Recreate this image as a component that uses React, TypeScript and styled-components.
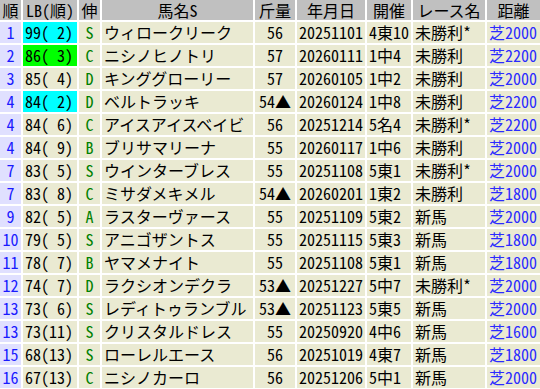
import React from 'react'
import styled, { createGlobalStyle } from 'styled-components'

const GlobalStyle = createGlobalStyle`
  html, body {
    margin: 0;
    padding: 0;
    background: #ffffff;
  }
  body {
    font-family: "Noto Sans CJK JP", "Noto Sans", sans-serif;
    font-size: 16px;
    color: #000000;
    font-feature-settings: "hwid";
  }
`

interface Entry {
  rank: string
  lb: string
  lbColor?: string
  grow: string
  name: string
  weight: string
  date: string
  meet: string
  race: string
  dist: string
}

const entries: Array<Entry> = [
  { rank: '1', lb: '99( 2)', lbColor: '#00ffff', grow: 'S', name: 'ウィロークリーク', weight: '56', date: '20251101', meet: '4東10', race: '未勝利*', dist: '芝2000' },
  { rank: '2', lb: '86( 3)', lbColor: '#00ff00', grow: 'C', name: 'ニシノヒノトリ', weight: '57', date: '20260111', meet: '1中4', race: '未勝利', dist: '芝2200' },
  { rank: '3', lb: '85( 4)', grow: 'D', name: 'キンググローリー', weight: '57', date: '20260105', meet: '1中2', race: '未勝利', dist: '芝2000' },
  { rank: '4', lb: '84( 2)', lbColor: '#00ffff', grow: 'D', name: 'ベルトラッキ', weight: '54▲', date: '20260124', meet: '1中8', race: '未勝利', dist: '芝2200' },
  { rank: '4', lb: '84( 6)', grow: 'C', name: 'アイスアイスベイビ', weight: '56', date: '20251214', meet: '5名4', race: '未勝利*', dist: '芝2200' },
  { rank: '4', lb: '84( 9)', grow: 'B', name: 'ブリサマリーナ', weight: '55', date: '20260117', meet: '1中6', race: '未勝利', dist: '芝2000' },
  { rank: '7', lb: '83( 5)', grow: 'S', name: 'ウインターブレス', weight: '55', date: '20251108', meet: '5東1', race: '未勝利*', dist: '芝2000' },
  { rank: '7', lb: '83( 8)', grow: 'C', name: 'ミサダメキメル', weight: '54▲', date: '20260201', meet: '1東2', race: '未勝利', dist: '芝1800' },
  { rank: '9', lb: '82( 5)', grow: 'A', name: 'ラスターヴァース', weight: '55', date: '20251109', meet: '5東2', race: '新馬', dist: '芝2000' },
  { rank: '10', lb: '79( 5)', grow: 'S', name: 'アニゴザントス', weight: '55', date: '20251115', meet: '5東3', race: '新馬', dist: '芝1800' },
  { rank: '11', lb: '78( 7)', grow: 'B', name: 'ヤマメナイト', weight: '55', date: '20251108', meet: '5東1', race: '新馬', dist: '芝1800' },
  { rank: '12', lb: '74( 7)', grow: 'D', name: 'ラクシオンデクラ', weight: '53▲', date: '20251227', meet: '5中7', race: '未勝利*', dist: '芝2000' },
  { rank: '13', lb: '73( 6)', grow: 'S', name: 'レディトゥランブル', weight: '53▲', date: '20251123', meet: '5東5', race: '新馬', dist: '芝2000' },
  { rank: '13', lb: '73(11)', grow: 'S', name: 'クリスタルドレス', weight: '55', date: '20250920', meet: '4中6', race: '新馬', dist: '芝1600' },
  { rank: '15', lb: '68(13)', grow: 'S', name: 'ローレルエース', weight: '56', date: '20251019', meet: '4東7', race: '新馬', dist: '芝1800' },
  { rank: '16', lb: '67(13)', grow: 'C', name: 'ニシノカーロ', weight: '56', date: '20251206', meet: '5中1', race: '新馬', dist: '芝2000' },
]

const headers = ['順', 'LB(順)', '伸', '馬名S', '斤量', '年月日', '開催', 'レース名', '距離']

const App: React.FC = () => {
  return (
    <>
      <GlobalStyle />
      <Table>
        <HeaderRow>
          {headers.map((h, i) => (
            <HeaderCell key={i}>{h}</HeaderCell>
          ))}
        </HeaderRow>
        {entries.map((e, i) => (
          <Row key={i}>
            <RankCell>{e.rank}</RankCell>
            <LbCell bg={e.lbColor}>{e.lb}</LbCell>
            <GrowCell>{e.grow}</GrowCell>
            <Cell>{e.name}</Cell>
            <WeightCell>{e.weight}</WeightCell>
            <Cell>{e.date}</Cell>
            <Cell>{e.meet}</Cell>
            <Cell>{e.race}</Cell>
            <DistCell>{e.dist}</DistCell>
          </Row>
        ))}
      </Table>
    </>
  )
}

const columns = '21px 54px 21px 151px 40px 68px 44px 72px 53px'

const Table = styled.div`
  display: flex;
  flex-direction: column;
  gap: 2px;
  width: 540px;
  background: #ffffff;
`

const HeaderRow = styled.div`
  display: grid;
  grid-template-columns: ${columns};
  gap: 2px;
  height: 20px;
`

const HeaderCell = styled.div`
  background: #c0c0c0;
  text-align: center;
  line-height: 20px;
  white-space: nowrap;
`

const Row = styled.div`
  display: grid;
  grid-template-columns: ${columns};
  gap: 2px;
  height: 21px;
`

const Cell = styled.div`
  background: #eaead2;
  line-height: 21px;
  padding-left: 2px;
  white-space: pre;
`

const RankCell = styled(Cell)`
  background: #e0e0ff;
  color: #1a1aff;
  text-align: center;
  padding-left: 0;
`

interface LbProps {
  bg?: string
}

const LbCell = styled(Cell)<LbProps>`
  background: ${props => props.bg || '#eaead2'};
`

const GrowCell = styled(Cell)`
  color: #008000;
  text-align: center;
  padding-left: 0;
`

const WeightCell = styled(Cell)`
  text-align: center;
  padding-left: 0;
`

const DistCell = styled(Cell)`
  color: #2b2bff;
`

export default App
